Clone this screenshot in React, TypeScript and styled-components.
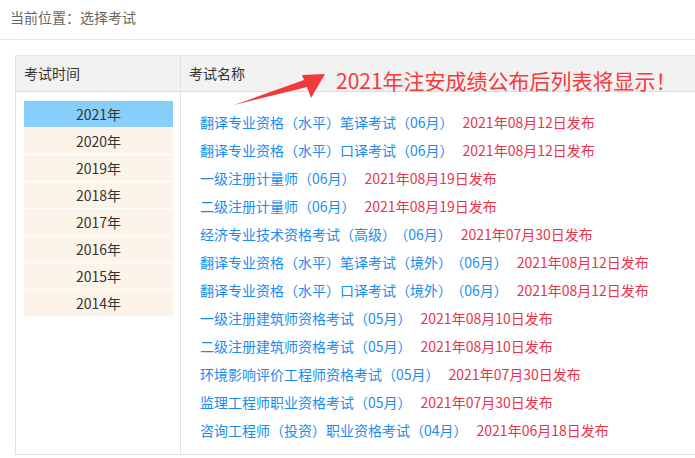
import styled, { createGlobalStyle } from "styled-components";

const GlobalStyle = createGlobalStyle`
  html, body {
    margin: 0;
    padding: 0;
    background: #fff;
    overflow: hidden;
    font-family: "Noto Sans CJK SC", "Noto Sans", sans-serif;
    color: #333;
  }
`;

const Page = styled.div`
  width: 695px;
  height: 458px;
  overflow: hidden;
`;

const Breadcrumb = styled.div`
  height: 39px;
  line-height: 34px;
  padding-left: 10px;
  font-size: 14px;
  color: #666;
  border-bottom: 1px solid #e8e8e8;
`;

const Table = styled.div`
  position: relative;
  margin: 15px -30px 0 15px;
  display: grid;
  grid-template-columns: 165px 1fr;
  border: 1px solid #e0e0e0;
  border-top-color: #e6e6e6;
`;

const HeadCell = styled.div<{ first?: boolean }>`
  height: 35px;
  line-height: 35px;
  padding-left: 8px;
  background: #f2f2f2;
  font-size: 14px;
  color: #333;
  border-bottom: 1px solid #dcdcdc;
  border-right: ${(p) => (p.first ? "1px solid #e2e2e2" : "none")};
`;

const YearCell = styled.div`
  padding: 9px 7px 0 8px;
  border-right: 1px solid #e2e2e2;
  display: flex;
  flex-direction: column;
  gap: 1px;
`;

const YearItem = styled.div<{ active?: boolean }>`
  height: 26px;
  line-height: 26px;
  text-align: center;
  font-size: 14px;
  color: #333;
  background: ${(p) => (p.active ? "#87cefa" : "#fcf3e9")};
`;

const ExamCell = styled.div`
  padding: 16px 0 10px 19px;
  display: flex;
  flex-direction: column;
`;

const ExamRow = styled.div`
  height: 28px;
  line-height: 28px;
  font-size: 14px;
  white-space: nowrap;
`;

const ExamName = styled.a`
  color: #1a8cf0;
  text-decoration: none;
  word-spacing: -5px;
`;

const ExamDate = styled.span`
  margin-left: 9px;
  color: #e8344b;
`;

const Notice = styled.div`
  position: absolute;
  left: 320px;
  top: 9px;
  font-size: 21px;
  line-height: 30px;
  color: #f53b3b;
  white-space: nowrap;
`;

const Arrow = styled.svg`
  position: absolute;
  left: 0;
  top: 0;
  pointer-events: none;
`;

const years = ["2021", "2020", "2019", "2018", "2017", "2016", "2015", "2014"];

const exams: [string, string][] = [
  ["翻译专业资格（水平）笔译考试（06月）", "2021年08月12日发布"],
  ["翻译专业资格（水平）口译考试（06月）", "2021年08月12日发布"],
  ["一级注册计量师（06月）", "2021年08月19日发布"],
  ["二级注册计量师（06月）", "2021年08月19日发布"],
  ["经济专业技术资格考试（高级） （06月）", "2021年07月30日发布"],
  ["翻译专业资格（水平）笔译考试（境外） （06月）", "2021年08月12日发布"],
  ["翻译专业资格（水平）口译考试（境外） （06月）", "2021年08月12日发布"],
  ["一级注册建筑师资格考试（05月）", "2021年08月10日发布"],
  ["二级注册建筑师资格考试（05月）", "2021年08月10日发布"],
  ["环境影响评价工程师资格考试（05月）", "2021年07月30日发布"],
  ["监理工程师职业资格考试（05月）", "2021年07月30日发布"],
  ["咨询工程师（投资）职业资格考试（04月）", "2021年06月18日发布"],
];

export default function App() {
  return (
    <Page>
      <GlobalStyle />
      <Breadcrumb>当前位置：选择考试</Breadcrumb>
      <Table>
        <HeadCell first>考试时间</HeadCell>
        <HeadCell>考试名称</HeadCell>
        <YearCell>
          {years.map((y, i) => (
            <YearItem key={y} active={i === 0}>
              {y}年
            </YearItem>
          ))}
        </YearCell>
        <ExamCell>
          {exams.map(([name, date]) => (
            <ExamRow key={name}>
              <ExamName href="#">{name}</ExamName>
              <ExamDate>{date}</ExamDate>
            </ExamRow>
          ))}
        </ExamCell>

        {/* arrow + notice lie over the header */}
        <Arrow width="340" height="60" viewBox="0 0 340 60">
          <polygon
            points="218,49 288,24 286,19 309,18 295,42 291,31"
            fill="#f23a3a"
          />
        </Arrow>
        <Notice>2021年注安成绩公布后列表将显示！</Notice>
      </Table>
    </Page>
  );
}
